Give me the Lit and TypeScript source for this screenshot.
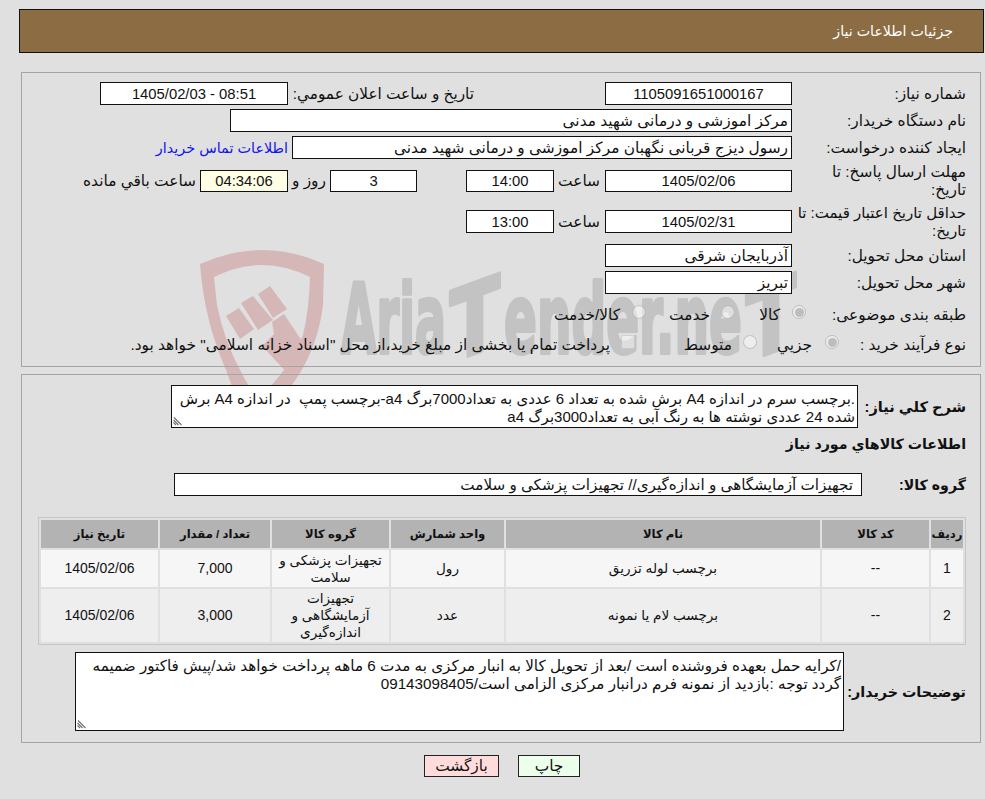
import { LitElement, html, css } from "lit";
import { customElement } from "lit/decorators.js";

const grip = html`<svg class="grip" viewBox="0 0 9 9" aria-hidden="true"><path d="M1 0.5 L8.5 8 M0.5 3 L5.5 8 M0.5 5.5 L3 8" fill="none" stroke="#6f6f6f" stroke-width="1.1"/></svg>`;

@customElement("app-root")
export class AppRoot extends LitElement {
  static styles = css`
    :host { display: block; position: relative; min-height: 799px; background: #e0e0e0; overflow: hidden;
      font-family: "Liberation Sans", "DejaVu Sans", sans-serif; font-size: 15.4px; color: #111; direction: rtl; }
    * { box-sizing: border-box; }
    .wm { position: absolute; left: 0; top: 0; width: 985px; height: 799px; }
    .wm text { font-family: "DejaVu Sans", sans-serif; font-weight: 700; fill: #c3c3c3; stroke: #c3c3c3; stroke-width: 4px; stroke-linejoin: round; direction: ltr; }
    .page { position: relative; display: flex; flex-direction: column; padding-top: 9px; }
    .head { height: 44px; margin: 0 1px 0 19px; background: #8c6c42; border: 1px solid #111; color: #fff;
      display: flex; align-items: center; padding-right: 30px; font-size: 14.2px; }
    .set { border: 1px solid #a4a4a4; margin: 0 4px 0 21px; }
    .set1 { margin-top: 19px; height: 295px; padding: 9px 14px 0 0; display: flex; flex-direction: column; gap: 4px; }
    .set2 { margin-top: 7px; height: 369px; padding: 10px 14px 0 0; display: flex; flex-direction: column; }
    .r { display: flex; align-items: center; min-height: 23px; }
    .h36 { height: 36px; } .h37 { height: 37px; } .h34 { height: 34px; } .h18 { height: 18px; min-height: 18px; }
    .lab { width: 174px; flex: none; line-height: 18px; padding-left: 2px; white-space: nowrap; }
    .lab.tight { font-size: 15px; }
    .box { height: 23px; flex: none; background: #fff; border: 1px solid #111; display: flex; align-items: center;
      justify-content: center; white-space: nowrap; }
    .box.h22 { height: 22px; }
    .box.start { justify-content: flex-start; padding-right: 3px; }
    .d { font-size: 14.8px; }
    .w187 { width: 187px; } .w188 { width: 188px; } .w88 { width: 88px; } .w87 { width: 87px; }
    .w562 { width: 562px; } .w500 { width: 500px; }
    .rem { background: #ffffe6; }
    .l2 { margin-right: 131px; width: 186px; white-space: nowrap; font-size: 15.3px; }
    .link { color: #1414ee; margin-right: 4px; white-space: nowrap; font-size: 14.4px; }
    .sa { width: 51px; flex: none; padding-right: 5px; white-space: nowrap; }
    .gap49 { margin-right: 49px; }
    .rz { width: 42px; flex: none; text-align: center; white-space: nowrap; }
    .baghi { padding-right: 4px; white-space: nowrap; }
    .radio { width: 14px; height: 14px; border-radius: 50%; flex: none; background: rgba(255,255,255,.45); border: 1px solid rgba(130,130,130,.4); position: relative; transform: translateY(-3px); }
    .radio.on { background: #ededed; border-color: #bdbdbd; }
    .radio.on::after { content: ""; position: absolute; inset: 1.5px; border-radius: 50%; background: #bdbdbd; }
    .chk { width: 14px; height: 14px; border-radius: 2px; flex: none; background: rgba(255,255,255,.45); border: 1px solid rgba(150,150,150,.3); transform: translateY(-3px); }
    .opt { display: flex; align-items: center; white-space: nowrap; flex: none; }
    .o1 { margin-right: -14px; width: 71px; } .o2 { width: 89px; } .o3 { width: 120px; }
    .p1 { margin-right: -47px; width: 82px; } .p2 { width: 122px; }
    .g11 { margin-right: 11px; } .g12 { margin-right: 12px; } .g13 { margin-right: 13px; }
    .bold { font-weight: 700; font-size: 14.2px; }
    .bold.s1 { font-size: 14.6px; }
    .bold.s2 { font-size: 14.3px; }
    .tw { position: relative; flex: none; }
    textarea { font: inherit; color: inherit; background: #fff; border: 1px solid #111; direction: rtl; padding: 4px 2px 0; margin: 0;
      line-height: 18px; overflow: hidden; resize: none; outline: none; display: block; border-radius: 0; white-space: pre; }
    .grip { position: absolute; left: 2px; bottom: 2px; width: 9px; height: 9px; }
    .ta1 { width: 687px; height: 43px; font-size: 15px; }
    .ta2 { width: 769px; height: 79px; font-size: 15.2px; }
    .lb2 { width: 108px; flex: none; white-space: nowrap; }
    .lb3 { width: 122px; flex: none; white-space: nowrap; }
    .g { margin-top: 6px; line-height: 20px; }
    .gbox { width: 688px; margin-right: 104px; justify-content: flex-start; padding-right: 8px; font-size: 15.2px; }
    .glab { width: 0; white-space: nowrap; }
    .mt19 { margin-top: 19px; } .mt7 { margin-top: 7px; }
    table { border: 1px solid #c6c6c6; border-spacing: 2px; width: 928px; margin-top: 21px; table-layout: fixed; border-collapse: separate; font-size: 13.6px; }
    th { background: #b3b3b3; height: 28px; padding: 0; font-weight: 700; font-size: 11.6px; }
    td { text-align: center; padding: 1px; line-height: 17px; }
    td.num { font-size: 14px; }
    .a td { background: #f6f6f6; height: 37px; }
    .b td { background: #eeeeee; height: 53px; }
    .c1 { width: 32px; } .c2 { width: 107px; } .c3 { width: 314px; } .c4 { width: 113px; } .c5 { width: 117px; } .c6 { width: 110px; } .c7 { width: 117px; }
    .actions { display: flex; justify-content: center; gap: 19px; margin: 12px 0 0 0; direction: ltr; padding-left: 19px; }
    .btn { height: 22px; border: 1px solid #222; display: flex; align-items: center; justify-content: center; }
    .back { width: 75px; background: #ffdcdc; }
    .print { width: 62px; background: #ebffeb; }
  `;

  render() {
    return html`
      <svg class="wm" viewBox="0 0 985 799" aria-hidden="true">
        <path fill="#d6b7b8" fill-rule="evenodd" d="M200 264 Q232 250 262 250 Q294 250 324 264 L323 305 Q318 345 298 376 Q282 402 258 425 Q236 402 226 370 Q204 320 200 264 Z M214 277 L217 305 Q224 340 240 370 Q250 390 258 398 Q290 370 303 335 Q309 310 310 277 Q286 265 262 265 Q238 265 214 277 Z"/>
        <g fill="#d6b7b8">
          <polygon points="226,316 239,308 254,329 240,339"/>
          <polygon points="241,303 253,296 273,320 258,330"/>
          <polygon points="258,294 270,286 287,309 273,318"/>
          <polygon points="272,322 284,314 308,350 292,378 262,346 274,334"/>
        </g>
        <text x="341" y="353" font-size="97" textLength="105" lengthAdjust="spacingAndGlyphs">Aria</text>
        <text x="450" y="353" font-size="97" textLength="50" lengthAdjust="spacingAndGlyphs" transform="translate(0 173) skewY(-20)">T</text>
        <text x="504" y="353" font-size="97" textLength="238" lengthAdjust="spacingAndGlyphs">ender.ne</text>
        <text x="746" y="353" font-size="97" textLength="50" lengthAdjust="spacingAndGlyphs" transform="translate(0 280) skewY(-20)">T</text>
      </svg>
      <div class="page">
        <div class="head">جزئیات اطلاعات نیاز</div>

        <section class="set set1">
          <div class="r"><div class="lab">شماره نیاز:</div><div class="box w187 d">1105091651000167</div>
            <div class="l2">تاریخ و ساعت اعلان عمومي:</div><div class="box w188 d"><bdi>1405/02/03 - 08:51</bdi></div></div>
          <div class="r"><div class="lab">نام دستگاه خریدار:</div><div class="box w562 start">مرکز اموزشی و درمانی شهید مدنی</div></div>
          <div class="r"><div class="lab">ایجاد کننده درخواست:</div><div class="box w500 start">رسول دیزج قربانی نگهبان مرکز اموزشی و درمانی شهید مدنی</div>
            <a class="link">اطلاعات تماس خریدار</a></div>
          <div class="r h36"><div class="lab">مهلت ارسال پاسخ: تا<br/>تاریخ:</div><div class="box h22 w187 d">1405/02/06</div>
            <div class="sa">ساعت</div><div class="box h22 w88 d">14:00</div>
            <div class="box h22 w87 d gap49">3</div><div class="rz">روز و</div>
            <div class="box h22 w88 d rem">04:34:06</div><div class="baghi">ساعت باقي مانده</div></div>
          <div class="r h37"><div class="lab tight">حداقل تاریخ اعتبار قیمت: تا<br/>تاریخ:</div><div class="box w187 d">1405/02/31</div>
            <div class="sa">ساعت</div><div class="box w88 d">13:00</div></div>
          <div class="r"><div class="lab">استان محل تحویل:</div><div class="box w187 start">آذربایجان شرقی</div></div>
          <div class="r"><div class="lab">شهر محل تحویل:</div><div class="box w187 start">تبریز</div></div>
          <div class="r h34"><div class="lab">طبقه بندی موضوعی:</div>
            <div class="opt o1"><span class="radio on"></span><span class="g12">کالا</span></div>
            <div class="opt o2"><span class="radio"></span><span class="g11">خدمت</span></div>
            <div class="opt o3"><span class="radio"></span><span class="g12">کالا/خدمت</span></div>
          </div>
          <div class="r h18"><div class="lab">نوع فرآیند خرید :</div>
            <div class="opt p1"><span class="radio on"></span><span class="g13">جزيي</span></div>
            <div class="opt p2"><span class="radio"></span><span class="g11">متوسط</span></div>
            <div class="opt"><span class="chk"></span><span class="g11">پرداخت تمام یا بخشی از مبلغ خرید،از محل "اسناد خزانه اسلامی" خواهد بود.</span></div>
          </div>
        </section>

        <section class="set set2">
          <div class="r"><div class="lb2 bold s1">شرح کلي نیاز:</div><div class="tw"><textarea class="ta1" readonly>.برچسب سرم در اندازه A4 برش شده به تعداد 6 عددی به تعداد7000برگ a4-برچسب پمپ  در اندازه A4 برش
شده 24 عددی نوشته ها به رنگ آبی به تعداد3000برگ a4</textarea>${grip}</div></div>
          <div class="g bold">اطلاعات کالاهاي مورد نیاز</div>
          <div class="r mt19"><div class="glab bold">گروه کالا:</div><div class="box gbox">تجهیزات آزمایشگاهی و اندازه‌گیری// تجهیزات پزشکی و سلامت</div></div>
          <table>
            <colgroup><col class="c1"/><col class="c2"/><col class="c3"/><col class="c4"/><col class="c5"/><col class="c6"/><col class="c7"/></colgroup>
            <thead><tr><th>ردیف</th><th>کد کالا</th><th>نام کالا</th><th>واحد شمارش</th><th>گروه کالا</th><th>تعداد / مقدار</th><th>تاریخ نیاز</th></tr></thead>
            <tbody>
              <tr class="a"><td class="num">1</td><td class="num">--</td><td>برچسب لوله تزریق</td><td>رول</td><td>تجهیزات پزشکی و<br/>سلامت</td><td class="num">7,000</td><td class="num">1405/02/06</td></tr>
              <tr class="b"><td class="num">2</td><td class="num">--</td><td>برچسب لام یا نمونه</td><td>عدد</td><td>تجهیزات<br/>آزمایشگاهی و<br/>اندازه‌گیری</td><td class="num">3,000</td><td class="num">1405/02/06</td></tr>
            </tbody>
          </table>
          <div class="r mt7"><div class="lb3 bold s2">توضیحات خریدار:</div><div class="tw"><textarea class="ta2" readonly>/کرایه حمل بعهده فروشنده است /بعد از تحویل کالا به انبار مرکزی به مدت 6 ماهه پرداخت خواهد شد/پیش فاکتور ضمیمه
گردد توجه :بازدید از نمونه فرم درانبار مرکزی الزامی است/09143098405</textarea>${grip}</div></div>
        </section>

        <div class="actions">
          <div class="btn back">بازگشت</div>
          <div class="btn print">چاپ</div>
        </div>
      </div>
    `;
  }
}
